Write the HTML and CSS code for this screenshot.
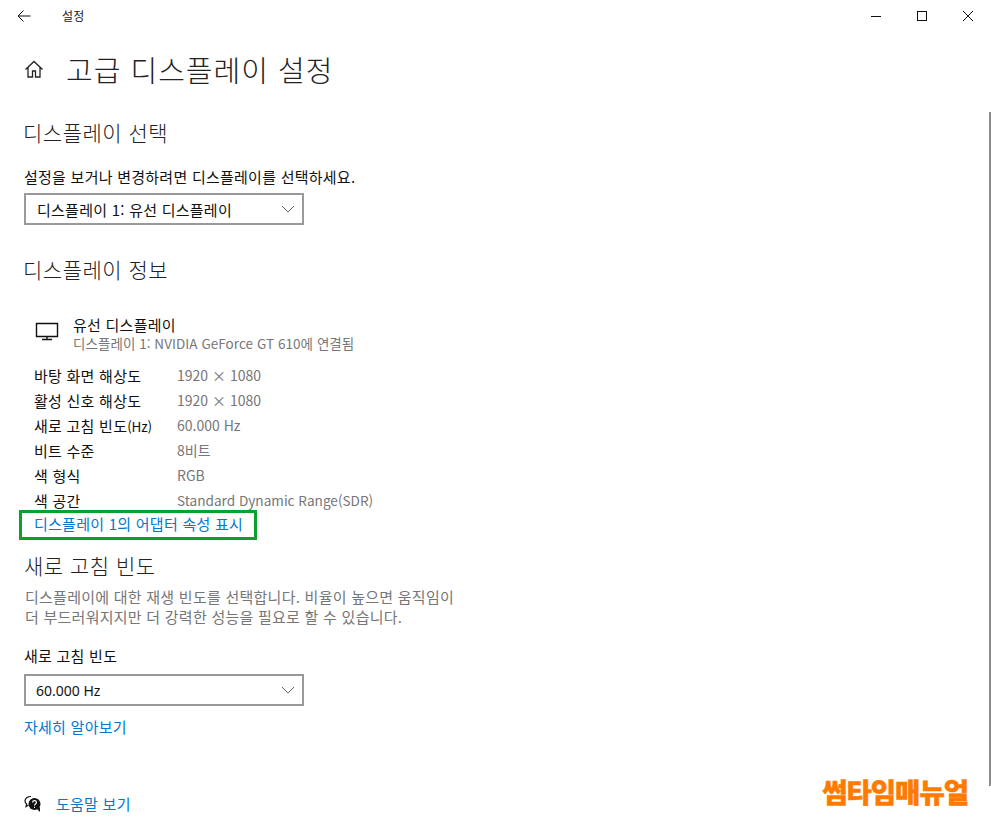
FILE: index.html
```html
<!DOCTYPE html>
<html lang="ko">
<head>
    <meta charset="UTF-8">
    <title>설정</title>
    <link rel="stylesheet" href="styles.css">
</head>
<body>
    <div class="titlebar">
        <svg class="back-icon" width="16" height="16" viewBox="0 0 16 16"><path d="M14.5 8H2M7.5 2.5L2 8l5.500 5.500" fill="none" stroke="#111" stroke-width="1"/></svg>
        <span class="app-name">설정</span>
        <div class="window-btns">
            <svg width="46" height="32" viewBox="0 0 46 32"><path d="M18 16.500h10" stroke="#111" fill="none"/></svg>
            <svg width="46" height="32" viewBox="0 0 46 32"><rect x="18.500" y="11.500" width="9" height="9" stroke="#111" fill="none"/></svg>
            <svg width="46" height="32" viewBox="0 0 46 32"><path d="M18 11l10 10M28 11L18 21" stroke="#111" fill="none"/></svg>
        </div>
    </div>

    <div class="content">
        <div class="page-head">
            <svg width="20" height="20" viewBox="0 0 20 20"><path d="M1.500 10.500L10 2.500l8.500 8M4 8.500V18h4.500v-6h3v6H16V8.500" fill="none" stroke="#222" stroke-width="1.300"/></svg>
            <h1>고급 디스플레이 설정</h1>
        </div>

        <h2 class="select-title">디스플레이 선택</h2>
        <p class="select-label">설정을 보거나 변경하려면 디스플레이를 선택하세요.</p>
        <div class="dropdown select-dropdown">
            <span>디스플레이 1: 유선 디스플레이</span>
            <svg width="14" height="8" viewBox="0 0 14 8"><path d="M1 1l6 6 6-6" fill="none" stroke="#666"/></svg>
        </div>

        <h2 class="info-title">디스플레이 정보</h2>
        <div class="monitor">
            <svg width="24" height="20" viewBox="0 0 24 20"><path d="M1.500 2.500h21v13h-21zM12 15.500v3M7 18.500h10" fill="none" stroke="#111" stroke-width="1.400"/></svg>
            <div>
                <div class="monitor-name">유선 디스플레이</div>
                <div class="monitor-sub">디스플레이 1: NVIDIA GeForce GT 610에 연결됨</div>
            </div>
        </div>
        <dl class="info-list">
            <div class="info-row"><dt>바탕 화면 해상도</dt><dd>1920 × 1080</dd></div>
            <div class="info-row"><dt>활성 신호 해상도</dt><dd>1920 × 1080</dd></div>
            <div class="info-row"><dt>새로 고침 빈도<span class="unit">(Hz)</span></dt><dd>60.000 Hz</dd></div>
            <div class="info-row"><dt>비트 수준</dt><dd>8비트</dd></div>
            <div class="info-row"><dt>색 형식</dt><dd>RGB</dd></div>
            <div class="info-row"><dt>색 공간</dt><dd class="dd-long">Standard Dynamic Range(SDR)</dd></div>
        </dl>
        <a class="link adapter-link">디스플레이 1의 어댑터 속성 표시</a>

        <h2 class="rate-title">새로 고침 빈도</h2>
        <p class="rate-desc">디스플레이에 대한 재생 빈도를 선택합니다. 비율이 높으면 움직임이<br>더 부드러워지지만 더 강력한 성능을 필요로 할 수 있습니다.</p>
        <p class="rate-label">새로 고침 빈도</p>
        <div class="dropdown rate-dropdown">
            <span class="rate-value">60.000 Hz</span>
            <svg width="14" height="8" viewBox="0 0 14 8"><path d="M1 1l6 6 6-6" fill="none" stroke="#666"/></svg>
        </div>
        <a class="link more-link">자세히 알아보기</a>

        <div class="help">
            <svg width="18" height="18" viewBox="0 0 18 18"><path d="M7 1.500C3.500 1.500 1 3.500 1 6c0 1.300.6 2.400 1.700 3.200L2 11.500l2.500-1.300" fill="none" stroke="#111" stroke-width="1.200"/><circle cx="10.500" cy="9" r="6" fill="#111"/><path d="M13 14l3 3v-5z" fill="#111"/><path d="M8.600 7.500c0-2.400 3.800-2.400 3.800 0 0 1.500-1.900 1.400-1.900 3" fill="none" stroke="#fff" stroke-width="1.200"/><path d="M10 11.800h1v1.100h-1z" fill="#fff"/></svg>
            <a class="link">도움말 보기</a>
        </div>
    </div>

    <div class="scrollbar"></div>
    <div class="watermark">썸타임매뉴얼</div>
</body>
</html>
```

FILE: styles.css
```css
html, body {
    height: 100%;
}
body {
    margin: 0;
    width: 991px;
    height: 824px;
    overflow: hidden;
    position: relative;
    background-color: white;
    color: #111;
    font-family: "Noto Sans CJK KR", "Noto Sans", sans-serif;
    font-size: 15px;
    letter-spacing: 0.25px;
}
.titlebar {
    display: flex;
    align-items: center;
    height: 32px;
    padding-left: 16px;
}
.app-name {
    margin-left: 30px;
    margin-bottom: 2px;
    font-size: 12px;
    color: #222;
}
.window-btns {
    display: flex;
    margin-left: auto;
}
.content {
    padding-left: 24px;
}
.page-head {
    display: flex;
    align-items: center;
    gap: 22px;
    height: 50px;
    margin-top: 12px;
}
h1 {
    margin: 0;
    font-size: 29px;
    font-weight: 300;
    letter-spacing: 1px;
    color: #222;
}
h2 {
    margin: 0;
    font-size: 21px;
    font-weight: 300;
    line-height: 28px;
    letter-spacing: 0.5px;
    color: #222;
}
p {
    margin: 0;
}
.select-title {
    margin-top: 24px;
    margin-left: -1px;
}
.select-label {
    margin-top: 20px;
    line-height: 22px;
}
.dropdown {
    display: flex;
    align-items: center;
    justify-content: space-between;
    box-sizing: border-box;
    width: 280px;
    height: 32px;
    padding: 0 7px 0 11px;
    border: 2px solid #999;
}
.select-dropdown {
    margin-top: 5px;
}
.info-title {
    margin-top: 30px;
    margin-left: -1px;
}
.monitor {
    display: flex;
    gap: 14px;
    margin-top: 32px;
    margin-left: 11px;
    line-height: 19px;
}
.monitor svg {
    margin-top: 6px;
}
.monitor-sub {
    font-size: 13.5px;
    letter-spacing: 0.05px;
    color: #767676;
}
.info-list {
    margin: 10px 0 0 10px;
}
.info-row {
    display: flex;
    height: 25px;
    line-height: 25px;
}
dt {
    width: 143px;
}
.unit {
    font-size: 13.5px;
    letter-spacing: -0.2px;
}
dd {
    margin: 0;
    font-size: 14px;
    letter-spacing: 0;
    color: #767676;
}
.dd-long {
    font-size: 13.6px;
}
.link {
    color: #0078d4;
}
.adapter-link {
    display: block;
    box-sizing: border-box;
    width: 238px;
    height: 30px;
    margin-top: -3px;
    margin-left: -5px;
    padding-left: 12px;
    line-height: 21px;
    border: 3px solid #0ca02c;
}
.rate-title {
    margin-top: 11px;
}
.rate-desc {
    margin-top: 8px;
    padding-left: 1px;
    line-height: 20px;
    color: #767676;
}
.rate-label {
    margin-top: 19px;
    line-height: 20px;
}
.rate-dropdown {
    margin-top: 8px;
    padding-left: 10px;
}
.rate-value {
    font-family: "Noto Sans", sans-serif;
    font-size: 14px;
    letter-spacing: 0;
}
.more-link {
    display: block;
    margin-top: 10px;
    line-height: 22px;
}
.help {
    display: flex;
    align-items: center;
    gap: 14px;
    margin-top: 55px;
}
.scrollbar {
    position: absolute;
    top: 112px;
    right: 0;
    width: 2px;
    height: 674px;
    background-color: #8a8a8a;
}
.watermark {
    position: absolute;
    right: 23px;
    bottom: 13px;
    font-size: 27.5px;
    font-weight: 900;
    letter-spacing: -1px;
    color: #ff7a00;
    -webkit-text-stroke: 0.5px #ff7a00;
}
```
